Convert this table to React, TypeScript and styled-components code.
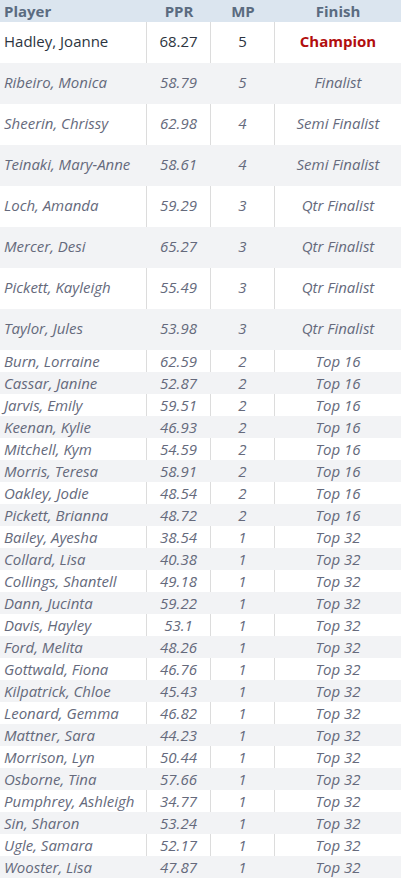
import React from "react";
import styled, { createGlobalStyle } from "styled-components";

const Global = createGlobalStyle`
  html, body { margin: 0; padding: 0; background: #ffffff; }
  body { font-family: "Open Sans", "Liberation Sans", sans-serif; }
`;

type Row = { name: string; ppr: string; mp: number; finish: string };

const rows: Row[] = [
  { name: "Hadley, Joanne", ppr: "68.27", mp: 5, finish: "Champion" },
  { name: "Ribeiro, Monica", ppr: "58.79", mp: 5, finish: "Finalist" },
  { name: "Sheerin, Chrissy", ppr: "62.98", mp: 4, finish: "Semi Finalist" },
  { name: "Teinaki, Mary-Anne", ppr: "58.61", mp: 4, finish: "Semi Finalist" },
  { name: "Loch, Amanda", ppr: "59.29", mp: 3, finish: "Qtr Finalist" },
  { name: "Mercer, Desi", ppr: "65.27", mp: 3, finish: "Qtr Finalist" },
  { name: "Pickett, Kayleigh", ppr: "55.49", mp: 3, finish: "Qtr Finalist" },
  { name: "Taylor, Jules", ppr: "53.98", mp: 3, finish: "Qtr Finalist" },
  { name: "Burn, Lorraine", ppr: "62.59", mp: 2, finish: "Top 16" },
  { name: "Cassar, Janine", ppr: "52.87", mp: 2, finish: "Top 16" },
  { name: "Jarvis, Emily", ppr: "59.51", mp: 2, finish: "Top 16" },
  { name: "Keenan, Kylie", ppr: "46.93", mp: 2, finish: "Top 16" },
  { name: "Mitchell, Kym", ppr: "54.59", mp: 2, finish: "Top 16" },
  { name: "Morris, Teresa", ppr: "58.91", mp: 2, finish: "Top 16" },
  { name: "Oakley, Jodie", ppr: "48.54", mp: 2, finish: "Top 16" },
  { name: "Pickett, Brianna", ppr: "48.72", mp: 2, finish: "Top 16" },
  { name: "Bailey, Ayesha", ppr: "38.54", mp: 1, finish: "Top 32" },
  { name: "Collard, Lisa", ppr: "40.38", mp: 1, finish: "Top 32" },
  { name: "Collings, Shantell", ppr: "49.18", mp: 1, finish: "Top 32" },
  { name: "Dann, Jucinta", ppr: "59.22", mp: 1, finish: "Top 32" },
  { name: "Davis, Hayley", ppr: "53.1", mp: 1, finish: "Top 32" },
  { name: "Ford, Melita", ppr: "48.26", mp: 1, finish: "Top 32" },
  { name: "Gottwald, Fiona", ppr: "46.76", mp: 1, finish: "Top 32" },
  { name: "Kilpatrick, Chloe", ppr: "45.43", mp: 1, finish: "Top 32" },
  { name: "Leonard, Gemma", ppr: "46.82", mp: 1, finish: "Top 32" },
  { name: "Mattner, Sara", ppr: "44.23", mp: 1, finish: "Top 32" },
  { name: "Morrison, Lyn", ppr: "50.44", mp: 1, finish: "Top 32" },
  { name: "Osborne, Tina", ppr: "57.66", mp: 1, finish: "Top 32" },
  { name: "Pumphrey, Ashleigh", ppr: "34.77", mp: 1, finish: "Top 32" },
  { name: "Sin, Sharon", ppr: "53.24", mp: 1, finish: "Top 32" },
  { name: "Ugle, Samara", ppr: "52.17", mp: 1, finish: "Top 32" },
  { name: "Wooster, Lisa", ppr: "47.87", mp: 1, finish: "Top 32" },
];

const COLS = "147px 64px 64px 1fr";

const Table = styled.div`
  width: 401px;
  display: flex;
  flex-direction: column;
`;

const HeaderRow = styled.div`
  display: grid;
  grid-template-columns: ${COLS};
  height: 22px;
  background: #dbe5ef;
  align-items: center;
`;

const HeadCell = styled.div<{ $left?: boolean }>`
  font-size: 15px;
  font-weight: 700;
  color: #5a6b80;
  text-align: ${(p) => (p.$left ? "left" : "center")};
  padding-left: ${(p) => (p.$left ? "4px" : "0")};
  line-height: 21px;
`;

const DataRow = styled.div<{ $tall: boolean; $alt: boolean }>`
  display: grid;
  grid-template-columns: ${COLS};
  height: ${(p) => (p.$tall ? "41px" : "22px")};
  background: ${(p) => (p.$alt ? "#f2f3f5" : "#ffffff")};
  --line: ${(p) => (p.$alt ? "#f2f3f5" : "#dcdcdc")};
  --shift: ${(p) => (p.$tall ? "3px" : "1px")};
`;

const Cell = styled.div<{ $left?: boolean; $lead?: boolean; $last?: boolean }>`
  display: flex;
  align-items: center;
  justify-content: ${(p) => (p.$left ? "flex-start" : "center")};
  padding-left: ${(p) => (p.$left ? "4px" : "0")};
  padding-bottom: var(--shift);
  border-right: ${(p) => (p.$last ? "none" : "1px solid var(--line)")};
  font-size: 15px;
  font-style: ${(p) => (p.$lead ? "normal" : "italic")};
  color: ${(p) => (p.$lead ? "#2c3440" : "#656a7c")};
  white-space: nowrap;
  overflow: hidden;
`;

const Champion = styled.span`
  font-weight: 700;
  color: #b20e0e;
  font-style: normal;
`;

export default function App() {
  return (
    <>
      <Global />
      <Table>
        <HeaderRow>
          <HeadCell $left>Player</HeadCell>
          <HeadCell>PPR</HeadCell>
          <HeadCell>MP</HeadCell>
          <HeadCell>Finish</HeadCell>
        </HeaderRow>
        {rows.map((r, i) => {
          const lead = i === 0;
          return (
            <DataRow key={r.name} $tall={i < 8} $alt={i % 2 === 1}>
              <Cell $left $lead={lead}>{r.name}</Cell>
              <Cell $lead={lead}>{r.ppr}</Cell>
              <Cell $lead={lead}>{r.mp}</Cell>
              <Cell $lead={lead} $last>
                {lead ? <Champion>{r.finish}</Champion> : r.finish}
              </Cell>
            </DataRow>
          );
        })}
      </Table>
    </>
  );
}
